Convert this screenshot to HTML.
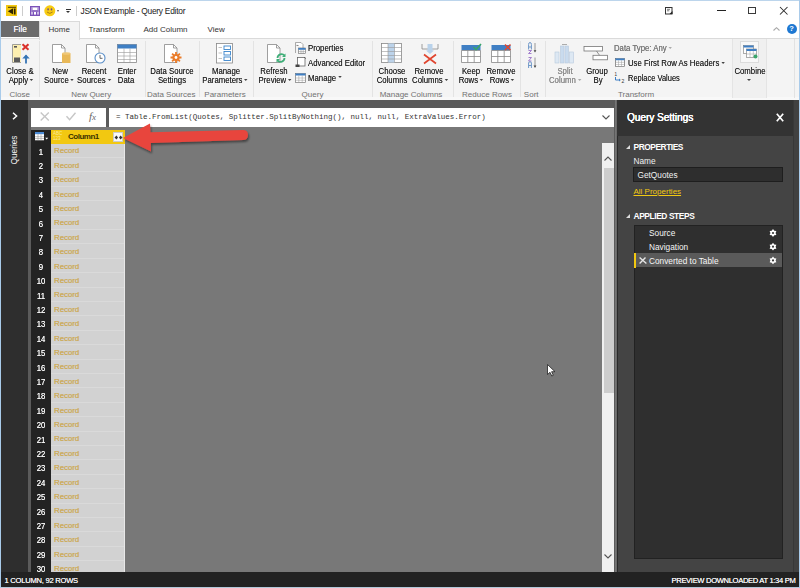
<!DOCTYPE html>
<html><head><meta charset="utf-8">
<style>
*{margin:0;padding:0;box-sizing:border-box}
html,body{width:800px;height:588px;overflow:hidden;background:#fff;font-family:"Liberation Sans",sans-serif}
.a{position:absolute}
svg.a{overflow:visible}
#root{position:relative;width:800px;height:588px;overflow:hidden;background:#fff}
.t{position:absolute;white-space:nowrap;line-height:1}
.rb{font-size:9px;color:#222;text-shadow:0 0 0.3px rgba(0,0,0,.6);text-align:center;transform:scaleX(.865);transform-origin:50% 0}
.gl{font-size:8px;color:#727272;text-align:center}
.sep{position:absolute;top:41px;width:1px;height:56px;background:#e3e3e3}
.rn{font-size:8.6px;color:#f4f4f4;text-align:center;font-weight:400;text-shadow:0 0 0.4px #fff;transform:scaleX(.9)}
.rec{font-size:7.8px;color:#cca851;text-shadow:0.3px 0 0 rgba(204,168,81,.7)}
.dd{display:inline-block;width:0;height:0;border-left:2px solid transparent;border-right:2px solid transparent;border-top:2.5px solid #444;vertical-align:middle;margin-left:2px;position:relative;top:-1px}
</style></head><body><div id="root">
<!-- ===== TITLE BAR ===== -->
<div class="a" style="left:0;top:0;width:800px;height:1px;background:#bcd5ec"></div>
<!-- pbi icon -->
<div class="a" style="left:6px;top:5px;width:11px;height:11px;background:#f2c811"></div>
<svg class="a" style="left:6px;top:5px" width="11" height="11" viewBox="0 0 11 11"><path d="M2 2.3H10" stroke="#4a3a00" stroke-width="1"/><path d="M1.8 6.3L7.2 3.2V9.6z" fill="#2e2400"/><rect x="8" y="3.5" width="1.6" height="6" fill="#2e2400"/></svg>
<div class="a" style="left:22px;top:6px;width:1px;height:10px;background:#ccc"></div>
<!-- save icon -->
<svg class="a" style="left:29.5px;top:6px" width="10" height="10" viewBox="0 0 10 10"><rect x="0.7" y="0.7" width="8.6" height="8.6" fill="#fff" stroke="#7b52b8" stroke-width="1.4"/><rect x="1.4" y="4.2" width="7.2" height="1.6" fill="#7b52b8"/><rect x="2.6" y="5.8" width="1.4" height="3.5" fill="#7b52b8"/><rect x="6" y="5.8" width="1.4" height="3.5" fill="#7b52b8"/><rect x="1.4" y="1.4" width="1.2" height="3" fill="#9a7ccc"/><rect x="7.4" y="1.4" width="1.2" height="3" fill="#9a7ccc"/></svg>
<!-- smiley -->
<svg class="a" style="left:44px;top:5px" width="12" height="12" viewBox="0 0 12 12"><circle cx="5.8" cy="5.8" r="5.5" fill="#f7cb12"/><ellipse cx="4.1" cy="4.4" rx="0.8" ry="1.1" fill="#6a4a90"/><ellipse cx="7.5" cy="4.4" rx="0.8" ry="1.1" fill="#6a4a90"/><path d="M3 7 Q5.8 9.8 8.6 7" stroke="#a07818" stroke-width="0.9" fill="none"/></svg>
<div class="a" style="left:57px;top:10px;width:0;height:0;border-left:1.5px solid transparent;border-right:1.5px solid transparent;border-top:2px solid #555"></div>
<div class="a" style="left:65.6px;top:9px;width:5px;height:0.9px;background:#333"></div>
<div class="a" style="left:65.6px;top:10.8px;width:0;height:0;border-left:2.5px solid transparent;border-right:2.5px solid transparent;border-top:2.6px solid #333"></div>
<div class="a" style="left:76px;top:6px;width:1px;height:10px;background:#ccc"></div>
<div class="t" style="left:80.5px;top:6.8px;font-size:8.4px;color:#222;letter-spacing:-0.26px">JSON Example - Query Editor</div>
<!-- window controls -->
<svg class="a" style="left:665px;top:6.5px" width="8" height="7.5" viewBox="0 0 8 7.5"><rect x="0.5" y="0.5" width="6.5" height="6.5" fill="#fff" stroke="#333" stroke-width="1"/><path d="M2 2.3h3M2 3.8h2.3" stroke="#555" stroke-width="0.8"/><path d="M4.5 7L7.5 4V7z" fill="#222"/></svg>
<div class="a" style="left:717px;top:10px;width:9px;height:1px;background:#222"></div>
<div class="a" style="left:748px;top:6.8px;width:8.2px;height:7.3px;border:1.2px solid #3a3a3a"></div>
<svg class="a" style="left:779.8px;top:6.8px" width="7.5" height="7.5" viewBox="0 0 8 8"><path d="M0 0L8 8M8 0L0 8" stroke="#2a2a2a" stroke-width="1.1"/></svg>

<!-- ===== TABS ROW ===== -->
<div class="a" style="left:1px;top:21px;width:38px;height:15.5px;background:#6b6b6b"></div>
<div class="t" style="left:13.5px;top:24.6px;font-size:8.3px;color:#f4f4f4;text-shadow:0 0 0.3px #fff">File</div>
<div class="t" style="left:88.5px;top:25.8px;font-size:8px;color:#333">Transform</div>
<div class="t" style="left:143.5px;top:25.8px;font-size:8px;color:#333">Add Column</div>
<div class="t" style="left:207.5px;top:25.8px;font-size:8px;color:#333">View</div>
<svg class="a" style="left:773px;top:26.5px" width="7" height="4" viewBox="0 0 7 4"><path d="M0.5 3.5L3.5 0.7L6.5 3.5" stroke="#a8a8a8" stroke-width="1.1" fill="none"/></svg>
<div class="a" style="left:786.5px;top:23.5px;width:10px;height:10px;border-radius:50%;background:#1e78d2"></div>
<div class="t" style="left:789.3px;top:25px;font-size:7.5px;color:#fff;font-weight:700">?</div>

<!-- ===== RIBBON ===== -->
<div class="a" style="left:1px;top:37.5px;width:798px;height:62.5px;background:#f4f4f4;border-top:1px solid #dadada;border-bottom:1px solid #e6e6e6"></div>
<div class="a" style="left:1px;top:97px;width:798px;height:3px;background:#f8f8f8"></div>
<div class="a" style="left:39px;top:21px;width:41px;height:18.5px;background:#f4f4f4;border:1px solid #dadada;border-bottom:none"></div>
<div class="t" style="left:48.5px;top:25.8px;font-size:8px;color:#333">Home</div>
<div class="sep" style="left:38.5px"></div>
<div class="sep" style="left:145px"></div>
<div class="sep" style="left:198.5px"></div>
<div class="sep" style="left:253px"></div>
<div class="sep" style="left:372px"></div>
<div class="sep" style="left:452.5px"></div>
<div class="sep" style="left:520px"></div>
<div class="sep" style="left:544.5px"></div>
<div class="t rb" style="left:-29.80px;width:100px;top:67.1px;">Close &amp;</div>
<div class="t rb" style="left:-29.50px;width:100px;top:76.1px;">Apply<span class="dd"></span></div>
<div class="t gl" style="left:-30.30px;width:100px;top:90.8px;">Close</div>
<div class="t rb" style="left:9.50px;width:100px;top:67.1px;">New</div>
<div class="t rb" style="left:9.00px;width:100px;top:76.1px;">Source<span class="dd"></span></div>
<div class="t rb" style="left:43.80px;width:100px;top:67.1px;">Recent</div>
<div class="t rb" style="left:43.80px;width:100px;top:76.1px;">Sources<span class="dd"></span></div>
<div class="t rb" style="left:76.50px;width:100px;top:67.1px;">Enter</div>
<div class="t rb" style="left:76.00px;width:100px;top:76.1px;">Data</div>
<div class="t gl" style="left:41.20px;width:100px;top:90.8px;">New Query</div>
<div class="t rb" style="left:122.30px;width:100px;top:67.1px;">Data Source</div>
<div class="t rb" style="left:121.50px;width:100px;top:76.1px;">Settings</div>
<div class="t gl" style="left:121.20px;width:100px;top:90.8px;">Data Sources</div>
<div class="t rb" style="left:175.50px;width:100px;top:67.1px;">Manage</div>
<div class="t rb" style="left:175.30px;width:100px;top:76.1px;">Parameters<span class="dd"></span></div>
<div class="t gl" style="left:175.00px;width:100px;top:90.8px;">Parameters</div>
<div class="t rb" style="left:224.20px;width:100px;top:67.1px;">Refresh</div>
<div class="t rb" style="left:225.40px;width:100px;top:76.1px;">Preview<span class="dd"></span></div>
<div class="t rb" style="left:308px;top:44.3px;text-align:left;transform-origin:0 0">Properties</div>
<div class="t rb" style="left:308px;top:59.3px;text-align:left;transform-origin:0 0">Advanced Editor</div>
<div class="t rb" style="left:308px;top:73.7px;text-align:left;transform-origin:0 0">Manage<span class="dd"></span></div>
<div class="t gl" style="left:262.50px;width:100px;top:90.8px;">Query</div>
<div class="t rb" style="left:342.00px;width:100px;top:67.1px;">Choose</div>
<div class="t rb" style="left:342.00px;width:100px;top:76.1px;">Columns</div>
<div class="t rb" style="left:379.00px;width:100px;top:67.1px;">Remove</div>
<div class="t rb" style="left:379.70px;width:100px;top:76.1px;">Columns<span class="dd"></span></div>
<div class="t gl" style="left:361.00px;width:100px;top:90.8px;">Manage Columns</div>
<div class="t rb" style="left:421.00px;width:100px;top:67.1px;">Keep</div>
<div class="t rb" style="left:421.00px;width:100px;top:76.1px;">Rows<span class="dd"></span></div>
<div class="t rb" style="left:451.00px;width:100px;top:67.1px;">Remove</div>
<div class="t rb" style="left:451.50px;width:100px;top:76.1px;">Rows<span class="dd"></span></div>
<div class="t gl" style="left:437.00px;width:100px;top:90.8px;">Reduce Rows</div>
<div class="t gl" style="left:481.20px;width:100px;top:90.8px;">Sort</div>
<div class="t rb" style="left:514.50px;width:100px;top:67.1px;color:#999">Split</div>
<div class="t rb" style="left:515.00px;width:100px;top:76.1px;color:#999">Column<span class="dd" style="border-top-color:#aaa"></span></div>
<div class="t rb" style="left:547.00px;width:100px;top:67.1px;">Group</div>
<div class="t rb" style="left:547.50px;width:100px;top:76.1px;">By</div>
<div class="t rb" style="left:614.4px;top:44.3px;text-align:left;transform-origin:0 0;color:#808080;">Data Type: Any<span class="dd" style="border-top-color:#aaa"></span></div>
<div class="t rb" style="left:627.5px;top:59.3px;text-align:left;transform-origin:0 0">Use First Row As Headers<span class="dd"></span></div>
<div class="t rb" style="left:627.5px;top:74.3px;text-align:left;transform-origin:0 0;transform:scaleX(.83)">Replace Values</div>
<div class="t gl" style="left:586.00px;width:100px;top:90.8px;">Transform</div>
<div class="a" style="left:731.5px;top:38.5px;width:35px;height:59px;background:#f0f0f0;border-left:1px solid #e4e4e4;border-right:1px solid #e4e4e4"></div>
<div class="a" style="left:739.5px;top:40.5px;width:19.5px;height:22px;background:#f8f8f8;border:1px solid #dcdcdc"></div>
<div class="t rb" style="left:699.50px;width:100px;top:67.1px;">Combine</div>
<div class="a" style="left:746.8px;top:78.5px;width:0;height:0;border-left:2px solid transparent;border-right:2px solid transparent;border-top:2.5px solid #444"></div>
<div class="a" style="left:794px;top:38.5px;width:1px;height:59px;background:#e2e2e2"></div>
<!-- Close & Apply -->
<svg class="a" style="left:11px;top:43px" width="20" height="21" viewBox="0 0 20 21"><path d="M10 1.5H1.5V19.5H10" fill="#fdf0b8" stroke="#8a8a8a" stroke-width="0.8"/><rect x="2" y="2" width="8" height="11" fill="#fdefb0"/><rect x="3" y="14.5" width="6" height="4.5" fill="#5a5a5a"/><rect x="3" y="3" width="3" height="1.6" fill="#555"/><path d="M11.5 1.2L17.5 6.8M17.5 1.2L11.5 6.8" stroke="#d9302a" stroke-width="2"/><path d="M15 20.5V12.5" stroke="#3574b5" stroke-width="1.8"/><path d="M11.3 15.5L15 11.5L18.7 15.5z" fill="#3574b5"/></svg>
<!-- New Source -->
<svg class="a" style="left:51px;top:43px" width="21" height="21" viewBox="0 0 21 21"><path d="M1.5 1.5H10.5L14 5V19.5H1.5Z" fill="#fff" stroke="#888" stroke-width="0.8"/><path d="M10.5 1.5V5H14" fill="none" stroke="#888" stroke-width="0.8"/><path d="M11 10.5H19.5V20H11Z" fill="#e8b858"/><ellipse cx="15.25" cy="10.5" rx="4.25" ry="1.3" fill="#f0c878"/></svg>
<!-- Recent Sources -->
<svg class="a" style="left:85px;top:43px" width="22" height="21" viewBox="0 0 22 21"><path d="M1.5 1.5H10.5L14 5V19.5H1.5Z" fill="#fff" stroke="#888" stroke-width="0.8"/><path d="M10.5 1.5V5H14" fill="none" stroke="#888" stroke-width="0.8"/><circle cx="15" cy="15" r="5" fill="#fff" stroke="#5b8fc8" stroke-width="1.1"/><path d="M15 12V15.3H17.5" stroke="#555" stroke-width="0.9" fill="none"/></svg>
<!-- Enter Data -->
<svg class="a" style="left:117px;top:44px" width="20" height="19" viewBox="0 0 20 19"><rect x="0.5" y="0.5" width="19" height="18" fill="#fff" stroke="#888" stroke-width="0.8"/><rect x="0.5" y="0.5" width="19" height="4" fill="#3f7fc4"/><path d="M0.5 8.5H19.5M0.5 12H19.5M0.5 15.5H19.5M7 4.5V18.5M13 4.5V18.5" stroke="#999" stroke-width="0.6"/></svg>
<!-- Data Source Settings -->
<svg class="a" style="left:163px;top:43px" width="21" height="21" viewBox="0 0 21 21"><path d="M1.5 1.5H10.5L14 5V19.5H1.5Z" fill="#fff" stroke="#888" stroke-width="0.8"/><path d="M10.5 1.5V5H14" fill="none" stroke="#888" stroke-width="0.8"/><g transform="translate(13,14.5)"><circle r="3.6" fill="#ea7c2a"/><path d="M0 -5.5V5.5M-5.5 0H5.5M-3.9 -3.9L3.9 3.9M3.9 -3.9L-3.9 3.9" stroke="#ea7c2a" stroke-width="1.8"/><circle r="1.4" fill="#fff"/></g></svg>
<!-- Manage Parameters -->
<svg class="a" style="left:216px;top:43px" width="18" height="21" viewBox="0 0 18 21"><rect x="0.5" y="0.5" width="16" height="19.5" fill="#fff" stroke="#888" stroke-width="0.8"/><rect x="8" y="3" width="6.5" height="3.5" fill="#fff" stroke="#3a85cc" stroke-width="0.9"/><rect x="8" y="8.5" width="6.5" height="3.5" fill="#fff" stroke="#3a85cc" stroke-width="0.9"/><rect x="8" y="14" width="6.5" height="3.5" fill="#fff" stroke="#3a85cc" stroke-width="0.9"/><path d="M2.5 4.5H6M2.5 10H6M2.5 15.5H6" stroke="#999" stroke-width="0.6"/></svg>
<!-- Refresh Preview -->
<svg class="a" style="left:266px;top:43px" width="21" height="21" viewBox="0 0 21 21"><path d="M1.5 1.5H10.5L14 5V19.5H1.5Z" fill="#fff" stroke="#888" stroke-width="0.8"/><path d="M10.5 1.5V5H14" fill="none" stroke="#888" stroke-width="0.8"/><path d="M11.5 15A4 4 0 0 1 18.5 12.5M18.5 15A4 4 0 0 1 11.5 17.5" stroke="#3fae78" stroke-width="1.8" fill="none"/><path d="M19.5 10.5V14H16z M10.5 19.5V16H14z" fill="#3fae78"/></svg>
<!-- Properties small -->
<svg class="a" style="left:295px;top:42px" width="11" height="12" viewBox="0 0 11 12"><path d="M0.5 0.5H6L8 2.5V7" fill="#fff" stroke="#888" stroke-width="0.7"/><path d="M0.5 0.5V11" stroke="#888" stroke-width="0.7"/><rect x="3.5" y="6" width="7" height="5.5" fill="#fff" stroke="#666" stroke-width="0.6"/><rect x="3.5" y="6" width="7" height="1.8" fill="#3f7fc4"/><path d="M6 7.8V11.5M8.2 7.8V11.5M3.5 9.6H10.5" stroke="#888" stroke-width="0.5"/><rect x="1.5" y="3" width="2" height="1" fill="#888"/></svg>
<!-- Advanced editor small -->
<svg class="a" style="left:295px;top:57px" width="11" height="11" viewBox="0 0 11 11"><rect x="2.5" y="0.5" width="7.5" height="8.5" fill="#fff" stroke="#666" stroke-width="0.8"/><rect x="0.5" y="7.5" width="4" height="2.5" fill="#444"/><path d="M9.5 0.5L10.5 1.5" stroke="#444" stroke-width="1"/></svg>
<!-- Manage small -->
<svg class="a" style="left:295px;top:73px" width="11" height="10" viewBox="0 0 11 10"><rect x="0.5" y="0.5" width="10" height="9" fill="#fff" stroke="#777" stroke-width="0.7"/><rect x="0.5" y="0.5" width="10" height="2" fill="#3f7fc4"/><path d="M0.5 5H10.5M0.5 7.3H10.5M3.8 2.5V9.5M7.2 2.5V9.5" stroke="#999" stroke-width="0.5"/></svg>
<!-- Choose Columns -->
<svg class="a" style="left:381px;top:43px" width="21" height="20" viewBox="0 0 21 20"><rect x="0.5" y="0.5" width="20" height="19" fill="#fff" stroke="#888" stroke-width="0.8"/><rect x="7" y="0.5" width="6.5" height="19" fill="#bcd3ea"/><path d="M0.5 4.5H20.5M0.5 8.5H20.5M0.5 12.5H20.5M0.5 16H20.5M7 0.5V19.5M13.5 0.5V19.5" stroke="#999" stroke-width="0.6"/></svg>
<!-- Remove Columns -->
<svg class="a" style="left:421px;top:43px" width="18" height="21" viewBox="0 0 18 21"><path d="M1 1V6H17V1" stroke="#888" stroke-width="0.8" fill="none"/><rect x="6.5" y="1" width="5" height="7" fill="#b9d2ea"/><path d="M5 7.5L9 11L13 7.5z" fill="#b9d2ea"/><path d="M3 11.5L15 20.5M15 11.5L3 20.5" stroke="#e0452f" stroke-width="1.7"/></svg>
<!-- Keep Rows -->
<svg class="a" style="left:461px;top:43px" width="21" height="21" viewBox="0 0 21 21"><rect x="0.5" y="2" width="19" height="5.5" fill="#3f7fc4"/><path d="M0.5 7.5H19.5V19.5H0.5Z M0.5 13.5H19.5 M6.8 7.5V19.5 M13.2 7.5V19.5" stroke="#888" stroke-width="0.8" fill="#fff"/><path d="M12.5 4L15 6.5L20 1" stroke="#3aa66a" stroke-width="1.6" fill="none"/></svg>
<!-- Remove Rows -->
<svg class="a" style="left:491px;top:43px" width="21" height="21" viewBox="0 0 21 21"><rect x="0.5" y="2" width="19" height="5.5" fill="#3f7fc4"/><path d="M0.5 7.5H19.5V19.5H0.5Z M0.5 13.5H19.5 M6.8 7.5V19.5 M13.2 7.5V19.5" stroke="#888" stroke-width="0.8" fill="#fff"/><path d="M14 1.5L19.5 7M19.5 1.5L14 7" stroke="#e0452f" stroke-width="1.5"/></svg>
<!-- Sort -->
<svg class="a" style="left:527.5px;top:41.5px" width="10" height="27" viewBox="0 0 10 27"><path d="M0.6 7.5V2.5Q0.6 0.5 2 0.5Q3.4 0.5 3.4 2.5V7.5M0.6 5H3.4" stroke="#6f98c8" stroke-width="1" fill="none"/><path d="M0.5 8.5H3.5L0.5 11.5H3.5" stroke="#9a72c8" stroke-width="0.9" fill="none"/><path d="M7 1V9" stroke="#8a8a8a" stroke-width="0.9"/><path d="M5.6 8.2H8.4L7 10.6z" fill="#444"/><path d="M0.5 15.5H3.5L0.5 19H3.5" stroke="#9a72c8" stroke-width="0.9" fill="none"/><path d="M0.6 26V21Q0.6 19.8 2 19.8Q3.4 19.8 3.4 21V26M0.6 23.5H3.4" stroke="#6f98c8" stroke-width="1" fill="none"/><path d="M7 15.5V24" stroke="#8a8a8a" stroke-width="0.9"/><path d="M5.6 23.5H8.4L7 25.9z" fill="#444"/></svg>
<!-- Split Column faded -->
<svg class="a" style="left:554px;top:43px" width="21" height="21" viewBox="0 0 21 21"><rect x="1" y="9" width="4" height="11" fill="#dde8f3" stroke="#b7c9dc" stroke-width="0.6"/><rect x="6.5" y="3" width="3.5" height="17" fill="#c9dbee" stroke="#b7c9dc" stroke-width="0.6"/><rect x="11" y="3" width="3.5" height="17" fill="#c9dbee" stroke="#b7c9dc" stroke-width="0.6"/><rect x="15.5" y="9" width="4" height="11" fill="#dde8f3" stroke="#b7c9dc" stroke-width="0.6"/><path d="M8 1.5H13" stroke="#999" stroke-width="0.8"/></svg>
<!-- Group By -->
<svg class="a" style="left:583px;top:45px" width="26" height="16" viewBox="0 0 26 16"><rect x="1" y="1.5" width="18.5" height="4.5" fill="#fff" stroke="#777" stroke-width="0.8"/><rect x="10" y="10.3" width="14.5" height="4.5" fill="#fff" stroke="#777" stroke-width="0.8"/><path d="M13.5 6L16.5 10.3" stroke="#777" stroke-width="0.8"/></svg>
<!-- Use first row -->
<svg class="a" style="left:614.5px;top:57.7px" width="10" height="9" viewBox="0 0 10 10" preserveAspectRatio="none"><rect x="0.5" y="0.5" width="9" height="9" fill="#fff" stroke="#666" stroke-width="0.7"/><rect x="0.5" y="0.5" width="9" height="2" fill="#3f7fc4"/><path d="M0.5 4.8H9.5M0.5 7.2H9.5M3.5 2.5V9.5M6.5 2.5V9.5" stroke="#999" stroke-width="0.5"/></svg>
<!-- Replace values -->
<svg class="a" style="left:614px;top:71px" width="12" height="12" viewBox="0 0 12 12"><text x="0.5" y="4.5" font-size="4.5" font-family="Liberation Sans" fill="#333">1</text><text x="7.5" y="11.5" font-size="5" font-family="Liberation Sans" fill="#333">2</text><path d="M1.5 6V9H5.5" stroke="#3f7fc4" stroke-width="1" fill="none"/><path d="M5 7.5L6.8 9L5 10.5z" fill="#3f7fc4"/></svg>
<!-- Combine icon -->
<svg class="a" style="left:743px;top:45px" width="15" height="14" viewBox="0 0 15 14"><rect x="0.5" y="0.5" width="10" height="8" fill="#fff" stroke="#777" stroke-width="0.6"/><rect x="0.5" y="0.5" width="10" height="2" fill="#3f7fc4"/><rect x="3.5" y="4" width="10" height="8.5" fill="#fff" stroke="#777" stroke-width="0.6"/><rect x="3.5" y="4" width="10" height="2" fill="#3f7fc4"/><path d="M3.5 9H13.5M7 6V12.5M10.3 6V12.5" stroke="#999" stroke-width="0.5"/><circle cx="12.5" cy="11.5" r="2" fill="#3aa66a"/></svg>
<!-- ===== BODY ===== -->
<div class="a" style="left:1px;top:100px;width:799px;height:472px;background:#5b5b5b"></div>
<!-- queries pane -->
<div class="a" style="left:1px;top:100px;width:27px;height:472px;background:#2e2e2e"></div>
<svg class="a" style="left:11.5px;top:112px" width="6" height="8" viewBox="0 0 6 8"><path d="M1 0.8L4.6 4L1 7.2" stroke="#fff" stroke-width="1.5" fill="none"/></svg>
<div class="t" style="left:14px;top:150px;font-size:8.3px;color:#f6f6f6;transform:translate(-50%,-50%) rotate(-90deg);transform-origin:center">Queries</div>
<!-- formula bar -->
<div class="a" style="left:31.2px;top:107.6px;width:74.6px;height:19px;background:#fff"></div>
<div class="a" style="left:108.8px;top:107.6px;width:505.4px;height:19px;background:#fff"></div>
<svg class="a" style="left:40px;top:112px" width="10" height="9" viewBox="0 0 10 9"><path d="M0.7 0.5L8.8 8.5M8.8 0.5L0.7 8.5" stroke="#c6c6c6" stroke-width="1.4"/></svg>
<svg class="a" style="left:66px;top:112px" width="10" height="9" viewBox="0 0 10 9"><path d="M0.5 4.3L3.6 7.8L9.5 0.7" stroke="#c6c6c6" stroke-width="1.4" fill="none"/></svg>
<div class="t" style="left:89px;top:110.5px;font-family:'Liberation Serif',serif;font-style:italic;font-size:11px;color:#666">f<span style="font-size:9px">x</span></div>
<div class="t" style="left:116px;top:113.6px;font-family:'Liberation Mono',monospace;font-size:7.52px;color:#333">= Table.FromList(Quotes, Splitter.SplitByNothing(), null, null, ExtraValues.Error)</div>
<svg class="a" style="left:602px;top:115px" width="8" height="5" viewBox="0 0 8 5"><path d="M0.5 0.5L4 4L7.5 0.5" stroke="#555" stroke-width="1.1" fill="none"/></svg>
<!-- grid area -->
<div class="a" style="left:31px;top:127px;width:583px;height:445px;background:#787878"></div>
<!-- row number col -->
<div class="a" style="left:31px;top:129.5px;width:20px;height:442.5px;background:#232323"></div>
<svg class="a" style="left:34.8px;top:132.2px" width="14" height="9" viewBox="0 0 14 9"><rect x="0" y="0" width="9" height="8.3" fill="#fff"/><rect x="0" y="0" width="9" height="2.2" fill="#4a8ad4"/><path d="M0 4.7H9M0 6.5H9M3 2.2V8.3M6 2.2V8.3" stroke="#888" stroke-width="0.5"/><path d="M10.2 5.8H13.2L11.7 7.5z" fill="#fff"/></svg>
<!-- header -->
<div class="a" style="left:51px;top:130px;width:74px;height:13.7px;background:#f2c811"></div>
<div class="t" style="left:53px;top:132px;font-size:4.5px;color:#f8e9a0;line-height:1.05">ABC<br>123</div>
<div class="t" style="left:68px;top:132.6px;font-size:8px;font-weight:700;color:#3a3200;letter-spacing:-0.5px">Column1</div>
<div class="a" style="left:112.5px;top:131.5px;width:10.5px;height:10.5px;background:#f8f8f8;border:0.5px solid #ccc"></div>
<svg class="a" style="left:113.5px;top:133.5px" width="9" height="7" viewBox="0 0 9 7"><path d="M0.5 3.5L2.5 1.5L4 3.5L2.5 5.5z M8.5 3.5L6.5 1.5L5 3.5L6.5 5.5z" fill="#333"/></svg>
<!-- records column -->
<div class="a" style="left:51px;top:143.7px;width:74px;height:428.3px;background:#d2d2d2;border-right:1px solid #e8e8e8"></div>
<div class="a" style="left:51px;top:143.70px;width:73px;height:14.4px;border-bottom:1px solid #dadada"></div>
<div class="t rn" style="top:147.50px;width:20px;left:31.3px">1</div>
<div class="t rec" style="left:54px;top:147.30px">Record</div>
<div class="a" style="left:51px;top:158.10px;width:73px;height:14.4px;border-bottom:1px solid #dadada"></div>
<div class="t rn" style="top:161.90px;width:20px;left:31.3px">2</div>
<div class="t rec" style="left:54px;top:161.70px">Record</div>
<div class="a" style="left:51px;top:172.50px;width:73px;height:14.4px;border-bottom:1px solid #dadada"></div>
<div class="t rn" style="top:176.30px;width:20px;left:31.3px">3</div>
<div class="t rec" style="left:54px;top:176.10px">Record</div>
<div class="a" style="left:51px;top:186.90px;width:73px;height:14.4px;border-bottom:1px solid #dadada"></div>
<div class="t rn" style="top:190.70px;width:20px;left:31.3px">4</div>
<div class="t rec" style="left:54px;top:190.50px">Record</div>
<div class="a" style="left:51px;top:201.30px;width:73px;height:14.4px;border-bottom:1px solid #dadada"></div>
<div class="t rn" style="top:205.10px;width:20px;left:31.3px">5</div>
<div class="t rec" style="left:54px;top:204.90px">Record</div>
<div class="a" style="left:51px;top:215.70px;width:73px;height:14.4px;border-bottom:1px solid #dadada"></div>
<div class="t rn" style="top:219.50px;width:20px;left:31.3px">6</div>
<div class="t rec" style="left:54px;top:219.30px">Record</div>
<div class="a" style="left:51px;top:230.10px;width:73px;height:14.4px;border-bottom:1px solid #dadada"></div>
<div class="t rn" style="top:233.90px;width:20px;left:31.3px">7</div>
<div class="t rec" style="left:54px;top:233.70px">Record</div>
<div class="a" style="left:51px;top:244.50px;width:73px;height:14.4px;border-bottom:1px solid #dadada"></div>
<div class="t rn" style="top:248.30px;width:20px;left:31.3px">8</div>
<div class="t rec" style="left:54px;top:248.10px">Record</div>
<div class="a" style="left:51px;top:258.90px;width:73px;height:14.4px;border-bottom:1px solid #dadada"></div>
<div class="t rn" style="top:262.70px;width:20px;left:31.3px">9</div>
<div class="t rec" style="left:54px;top:262.50px">Record</div>
<div class="a" style="left:51px;top:273.30px;width:73px;height:14.4px;border-bottom:1px solid #dadada"></div>
<div class="t rn" style="top:277.10px;width:20px;left:31.3px">10</div>
<div class="t rec" style="left:54px;top:276.90px">Record</div>
<div class="a" style="left:51px;top:287.70px;width:73px;height:14.4px;border-bottom:1px solid #dadada"></div>
<div class="t rn" style="top:291.50px;width:20px;left:31.3px">11</div>
<div class="t rec" style="left:54px;top:291.30px">Record</div>
<div class="a" style="left:51px;top:302.10px;width:73px;height:14.4px;border-bottom:1px solid #dadada"></div>
<div class="t rn" style="top:305.90px;width:20px;left:31.3px">12</div>
<div class="t rec" style="left:54px;top:305.70px">Record</div>
<div class="a" style="left:51px;top:316.50px;width:73px;height:14.4px;border-bottom:1px solid #dadada"></div>
<div class="t rn" style="top:320.30px;width:20px;left:31.3px">13</div>
<div class="t rec" style="left:54px;top:320.10px">Record</div>
<div class="a" style="left:51px;top:330.90px;width:73px;height:14.4px;border-bottom:1px solid #dadada"></div>
<div class="t rn" style="top:334.70px;width:20px;left:31.3px">14</div>
<div class="t rec" style="left:54px;top:334.50px">Record</div>
<div class="a" style="left:51px;top:345.30px;width:73px;height:14.4px;border-bottom:1px solid #dadada"></div>
<div class="t rn" style="top:349.10px;width:20px;left:31.3px">15</div>
<div class="t rec" style="left:54px;top:348.90px">Record</div>
<div class="a" style="left:51px;top:359.70px;width:73px;height:14.4px;border-bottom:1px solid #dadada"></div>
<div class="t rn" style="top:363.50px;width:20px;left:31.3px">16</div>
<div class="t rec" style="left:54px;top:363.30px">Record</div>
<div class="a" style="left:51px;top:374.10px;width:73px;height:14.4px;border-bottom:1px solid #dadada"></div>
<div class="t rn" style="top:377.90px;width:20px;left:31.3px">17</div>
<div class="t rec" style="left:54px;top:377.70px">Record</div>
<div class="a" style="left:51px;top:388.50px;width:73px;height:14.4px;border-bottom:1px solid #dadada"></div>
<div class="t rn" style="top:392.30px;width:20px;left:31.3px">18</div>
<div class="t rec" style="left:54px;top:392.10px">Record</div>
<div class="a" style="left:51px;top:402.90px;width:73px;height:14.4px;border-bottom:1px solid #dadada"></div>
<div class="t rn" style="top:406.70px;width:20px;left:31.3px">19</div>
<div class="t rec" style="left:54px;top:406.50px">Record</div>
<div class="a" style="left:51px;top:417.30px;width:73px;height:14.4px;border-bottom:1px solid #dadada"></div>
<div class="t rn" style="top:421.10px;width:20px;left:31.3px">20</div>
<div class="t rec" style="left:54px;top:420.90px">Record</div>
<div class="a" style="left:51px;top:431.70px;width:73px;height:14.4px;border-bottom:1px solid #dadada"></div>
<div class="t rn" style="top:435.50px;width:20px;left:31.3px">21</div>
<div class="t rec" style="left:54px;top:435.30px">Record</div>
<div class="a" style="left:51px;top:446.10px;width:73px;height:14.4px;border-bottom:1px solid #dadada"></div>
<div class="t rn" style="top:449.90px;width:20px;left:31.3px">22</div>
<div class="t rec" style="left:54px;top:449.70px">Record</div>
<div class="a" style="left:51px;top:460.50px;width:73px;height:14.4px;border-bottom:1px solid #dadada"></div>
<div class="t rn" style="top:464.30px;width:20px;left:31.3px">23</div>
<div class="t rec" style="left:54px;top:464.10px">Record</div>
<div class="a" style="left:51px;top:474.90px;width:73px;height:14.4px;border-bottom:1px solid #dadada"></div>
<div class="t rn" style="top:478.70px;width:20px;left:31.3px">24</div>
<div class="t rec" style="left:54px;top:478.50px">Record</div>
<div class="a" style="left:51px;top:489.30px;width:73px;height:14.4px;border-bottom:1px solid #dadada"></div>
<div class="t rn" style="top:493.10px;width:20px;left:31.3px">25</div>
<div class="t rec" style="left:54px;top:492.90px">Record</div>
<div class="a" style="left:51px;top:503.70px;width:73px;height:14.4px;border-bottom:1px solid #dadada"></div>
<div class="t rn" style="top:507.50px;width:20px;left:31.3px">26</div>
<div class="t rec" style="left:54px;top:507.30px">Record</div>
<div class="a" style="left:51px;top:518.10px;width:73px;height:14.4px;border-bottom:1px solid #dadada"></div>
<div class="t rn" style="top:521.90px;width:20px;left:31.3px">27</div>
<div class="t rec" style="left:54px;top:521.70px">Record</div>
<div class="a" style="left:51px;top:532.50px;width:73px;height:14.4px;border-bottom:1px solid #dadada"></div>
<div class="t rn" style="top:536.30px;width:20px;left:31.3px">28</div>
<div class="t rec" style="left:54px;top:536.10px">Record</div>
<div class="a" style="left:51px;top:546.90px;width:73px;height:14.4px;border-bottom:1px solid #dadada"></div>
<div class="t rn" style="top:550.70px;width:20px;left:31.3px">29</div>
<div class="t rec" style="left:54px;top:550.50px">Record</div>
<div class="a" style="left:51px;top:561.30px;width:73px;height:14.4px;border-bottom:1px solid #dadada"></div>
<div class="t rn" style="top:565.10px;width:20px;left:31.3px">30</div>
<div class="t rec" style="left:54px;top:564.90px">Record</div><!-- scrollbar -->
<div class="a" style="left:602px;top:143px;width:12px;height:429px;background:#f0f0f0"></div>
<div class="a" style="left:604px;top:168px;width:9.5px;height:225px;background:#cdcdcd"></div>
<svg class="a" style="left:604.3px;top:156.3px" width="8" height="5" viewBox="0 0 8 5"><path d="M0.5 4.5L4 1L7.5 4.5" stroke="#555" stroke-width="1.1" fill="none"/></svg>
<svg class="a" style="left:604px;top:554px" width="8" height="5" viewBox="0 0 8 5"><path d="M0.5 0.5L4 4L7.5 0.5" stroke="#555" stroke-width="1.1" fill="none"/></svg>
<div class="a" style="left:614.5px;top:100px;width:3px;height:472px;background:linear-gradient(90deg,#7a7a7a,#5a5a5a)"></div>

<!-- mouse cursor -->
<svg class="a" style="left:547.2px;top:364px" width="9" height="13" viewBox="0 0 9 13"><path d="M0.5 0.5V10.5L3 8.3L4.8 12L6.3 11.3L4.6 7.7H8z" fill="#fff" stroke="#222" stroke-width="0.8"/></svg>

<!-- ===== QUERY SETTINGS ===== -->
<div class="a" style="left:617px;top:100px;width:176px;height:472px;background:#444;border-left:1px solid #2a2a2a"></div>
<div class="a" style="left:617px;top:100px;width:176px;height:35.5px;background:#333"></div>
<div class="a" style="left:792.5px;top:100px;width:6.5px;height:472px;background:#414141;border-left:1px solid #383838"></div>
<div class="t" style="left:627px;top:112.8px;font-size:10px;color:#fff;text-shadow:0 0 0.5px #fff,0.3px 0 0 #fff">Query Settings</div>
<svg class="a" style="left:776px;top:113px" width="8" height="9" viewBox="0 0 8 9"><path d="M0.8 0.8L7.2 8.2M7.2 0.8L0.8 8.2" stroke="#fff" stroke-width="1.7"/></svg>
<!-- properties -->
<svg class="a" style="left:625px;top:144px" width="6" height="6" viewBox="0 0 6 6"><path d="M5 1V5H1z" fill="#ddd"/></svg>
<div class="t" style="left:633.5px;top:143px;font-size:8.4px;font-weight:700;color:#fff;letter-spacing:-0.45px">PROPERTIES</div>
<div class="t" style="left:633.5px;top:157px;font-size:8.3px;color:#f0f0f0">Name</div>
<div class="a" style="left:633px;top:166.5px;width:150px;height:15.5px;background:#2e2e2e;border:1px solid #1e1e1e"></div>
<div class="t" style="left:637.5px;top:171px;font-size:8.3px;color:#f0f0f0">GetQuotes</div>
<div class="t" style="left:633.5px;top:188px;font-size:8px;color:#f2c811;text-decoration:underline">All Properties</div>
<!-- applied steps -->
<svg class="a" style="left:625px;top:213px" width="6" height="6" viewBox="0 0 6 6"><path d="M5 1V5H1z" fill="#ddd"/></svg>
<div class="t" style="left:633.5px;top:212px;font-size:8.4px;font-weight:700;color:#fff;letter-spacing:-0.4px">APPLIED STEPS</div>
<div class="a" style="left:633.5px;top:225px;width:149.5px;height:334px;background:#2f2f2f;border:1px solid #222"></div>
<div class="t" style="left:649px;top:229px;font-size:8.3px;color:#f6f6f6">Source</div>
<div class="t" style="left:649px;top:243px;font-size:8.3px;color:#f6f6f6">Navigation</div>
<div class="a" style="left:634.5px;top:253.3px;width:147.5px;height:13.5px;background:#5a5a5a"></div>
<div class="a" style="left:634px;top:252.5px;width:2.4px;height:15px;background:#f2c811"></div>
<svg class="a" style="left:638.5px;top:256.5px" width="8" height="7" viewBox="0 0 8 7"><path d="M0.6 0.6L7.4 6.6M6.5 0.6L0.6 6.6" stroke="#e6e6e6" stroke-width="1.4"/></svg>
<div class="t" style="left:649px;top:257px;font-size:8.3px;color:#f6f6f6">Converted to Table</div>
<svg class="a" style="left:769px;top:228.6px" width="8" height="36" viewBox="0 0 8 36"><g id="gear" transform="translate(4,4)"><path d="M0.00,-3.90 L-1.30,-2.25 L-3.38,-1.95 L-2.60,-0.00 L-3.38,1.95 L-1.30,2.25 L-0.00,3.90 L1.30,2.25 L3.38,1.95 L2.60,0.00 L3.38,-1.95 L1.30,-2.25z" fill="#fff"/><circle r="1.1" fill="#3a3a3a"/></g><use href="#gear" y="13.7"/><use href="#gear" y="27.4"/></svg>

<!-- ===== STATUS BAR ===== -->
<div class="a" style="left:0;top:572px;width:800px;height:16px;background:#222"></div>
<div class="a" style="left:0;top:586.5px;width:800px;height:1.5px;background:#b4c8da"></div>
<div class="t" style="left:4.5px;top:576.5px;font-size:7.6px;color:#f2f2f2;letter-spacing:-0.25px;text-shadow:0 0 0.3px #fff">1 COLUMN, 92 ROWS</div>
<div class="t" style="left:671.5px;top:576.5px;font-size:7.6px;color:#f2f2f2;letter-spacing:-0.33px;text-shadow:0 0 0.3px #fff">PREVIEW DOWNLOADED AT 1:34 PM</div>
<div class="a" style="left:0;top:0;width:1px;height:588px;background:#a9cbea"></div>
<div class="a" style="left:799px;top:0;width:1px;height:588px;background:#a9cbea"></div>

<!-- ===== RED ARROW ===== -->
<svg class="a" style="left:0;top:0" width="800" height="588" viewBox="0 0 800 588">
<defs><filter id="sh" x="-20%" y="-50%" width="140%" height="200%"><feGaussianBlur in="SourceAlpha" stdDeviation="1.2"/><feOffset dx="1" dy="1.5"/><feComponentTransfer><feFuncA type="linear" slope="0.45"/></feComponentTransfer><feMerge><feMergeNode/><feMergeNode in="SourceGraphic"/></feMerge></filter></defs>
<path filter="url(#sh)" d="M123 138 L150 123.5 L150.5 132.2 L243 130 Q248 130 248 135 Q248 140 243 140 L150.8 143 L151 151.5 Z" fill="#e8453c"/>
</svg>
</div></body></html>
